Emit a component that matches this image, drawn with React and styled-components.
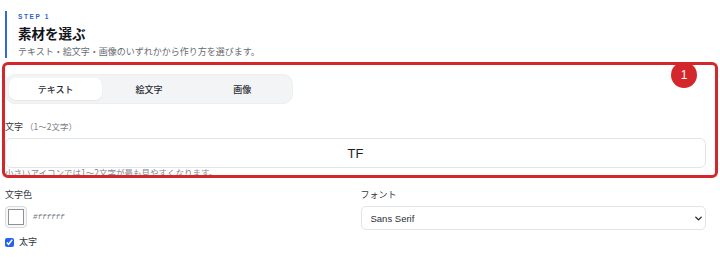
import styled, { createGlobalStyle } from "styled-components";
import { ChevronDown } from "lucide-react";

const GlobalStyle = createGlobalStyle`
  html, body {
    margin: 0;
    background: #ffffff;
    overflow: hidden;
  }
  body {
    font-family: "Noto Sans CJK JP", "Noto Sans", sans-serif;
    color: #1f2328;
  }
`;

const tabs = ["テキスト", "絵文字", "画像"];

export default function App() {
  return (
    <>
      <GlobalStyle />
      <Page>
        <StepHeader>
          <StepLabel>STEP 1</StepLabel>
          <StepTitle>素材を選ぶ</StepTitle>
          <StepDesc>テキスト・絵文字・画像のいずれかから作り方を選びます。</StepDesc>
        </StepHeader>

        <Segmented>
          {tabs.map((t, i) => (
            <Tab key={t} $active={i === 0}>
              {t}
            </Tab>
          ))}
        </Segmented>

        <Field>
          <Label>
            文字 <Muted>（1〜2文字）</Muted>
          </Label>
          <TextInput defaultValue="TF" />
          <Hint>小さいアイコンでは1〜2文字が最も見やすくなります。</Hint>
        </Field>

        <Columns>
          <div>
            <Label>文字色</Label>
            <ColorRow>
              <Swatch>
                <SwatchInner />
              </Swatch>
              <HexCode>#ffffff</HexCode>
            </ColorRow>
            <CheckRow>
              <Check type="checkbox" defaultChecked />
              太字
            </CheckRow>
          </div>
          <div>
            <Label>フォント</Label>
            <SelectWrap>
              <Select defaultValue="sans">
                <option value="sans">Sans Serif</option>
                <option value="serif">Serif</option>
              </Select>
              <Chevron size={11} strokeWidth={3} />
            </SelectWrap>
          </div>
        </Columns>

        <Annotation>
          <Badge>1</Badge>
        </Annotation>
      </Page>
    </>
  );
}

const Page = styled.div`
  position: relative;
  padding: 11px 14px 0 5px;
  height: 274px;
  box-sizing: border-box;
`;

const StepHeader = styled.div`
  border-left: 2px solid #2f6bd8;
  padding-left: 11px;
  height: 47px;
  box-sizing: border-box;
`;

const StepLabel = styled.div`
  font-family: "Liberation Sans", "Noto Sans", sans-serif;
  font-size: 6.5px;
  font-weight: 700;
  letter-spacing: 1.6px;
  color: #2f5fc4;
  line-height: 11px;
`;

const StepTitle = styled.div`
  font-size: 13.5px;
  font-weight: 700;
  color: #111418;
  line-height: 20px;
  margin-top: 1px;
`;

const StepDesc = styled.div`
  font-size: 9px;
  color: #666b72;
  line-height: 13px;
  margin-top: 2px;
`;

const Segmented = styled.div`
  margin-top: 16px;
  width: 288px;
  height: 30px;
  box-sizing: border-box;
  padding: 3px;
  display: grid;
  grid-template-columns: repeat(3, 1fr);
  background: #f3f4f6;
  border: 1px solid #eceef1;
  border-radius: 10px;
`;

const Tab = styled.div`
  display: flex;
  align-items: center;
  justify-content: center;
  font-size: 9px;
  font-weight: 500;
  color: #2b2f35;
  border-radius: 7px;
  background: ${(p) => (p.$active ? "#ffffff" : "transparent")};
  box-shadow: ${(p) => (p.$active ? "0 1px 2px rgba(0,0,0,0.06)" : "none")};
`;

const Field = styled.div`
  margin-top: 15px;
`;

const Label = styled.div`
  font-size: 9px;
  color: #33373d;
  line-height: 14px;
`;

const Muted = styled.span`
  color: #7a7f86;
  font-size: 8.5px;
`;

const TextInput = styled.input`
  display: block;
  margin-top: 4px;
  width: 100%;
  height: 30px;
  box-sizing: border-box;
  border: 1px solid #e2e4e8;
  border-radius: 6px;
  text-align: center;
  font-family: "Liberation Sans", "Noto Sans", sans-serif;
  font-size: 13px;
  color: #1c1f23;
  background: #fff;
  outline: none;
`;

const Hint = styled.div`
  font-size: 8.5px;
  color: #80858c;
  line-height: 12px;
  margin-top: -2px;
`;

const Columns = styled.div`
  margin-top: 10px;
  display: grid;
  grid-template-columns: 1fr 1fr;
  column-gap: 10px;
`;

const ColorRow = styled.div`
  margin-top: 4px;
  display: flex;
  align-items: center;
  gap: 6px;
`;

const Swatch = styled.div`
  width: 22px;
  height: 22px;
  box-sizing: border-box;
  border: 1px solid #d8dadd;
  border-radius: 4px;
  padding: 2px;
  background: #f7f7f7;
`;

const SwatchInner = styled.div`
  width: 100%;
  height: 100%;
  box-sizing: border-box;
  border: 1px solid #8d9094;
  background: #ffffff;
`;

const HexCode = styled.span`
  font-family: "Liberation Mono", monospace;
  font-size: 7.5px;
  color: #6d7278;
  font-style: italic;
`;

const CheckRow = styled.label`
  margin-top: 7px;
  display: flex;
  align-items: center;
  gap: 5px;
  font-size: 9px;
  color: #33373d;
  line-height: 14px;
`;

const Check = styled.input`
  margin: 0;
  width: 9px;
  height: 9px;
  accent-color: #2563eb;
`;

const SelectWrap = styled.div`
  position: relative;
  margin-top: 4px;
`;

const Select = styled.select`
  display: block;
  width: 100%;
  height: 24px;
  box-sizing: border-box;
  appearance: none;
  border: 1px solid #e2e4e8;
  border-radius: 5px;
  background: #fff;
  padding: 0 9px;
  font-family: "Liberation Sans", "Noto Sans", sans-serif;
  font-size: 9.5px;
  color: #2b2f35;
  outline: none;
`;

const Chevron = styled(ChevronDown)`
  position: absolute;
  right: 2px;
  top: 7px;
  color: #222;
`;

const Annotation = styled.div`
  position: absolute;
  left: 2px;
  top: 62px;
  width: 716px;
  height: 116px;
  box-sizing: border-box;
  border: 3px solid #d3272c;
  border-radius: 6px;
  pointer-events: none;
`;

const Badge = styled.div`
  position: absolute;
  left: 666px;
  top: -3px;
  width: 26px;
  height: 26px;
  border-radius: 50%;
  background: #d3272c;
  color: #ffffff;
  font-family: "Liberation Sans", sans-serif;
  font-size: 12px;
  display: flex;
  align-items: center;
  justify-content: center;
`;
